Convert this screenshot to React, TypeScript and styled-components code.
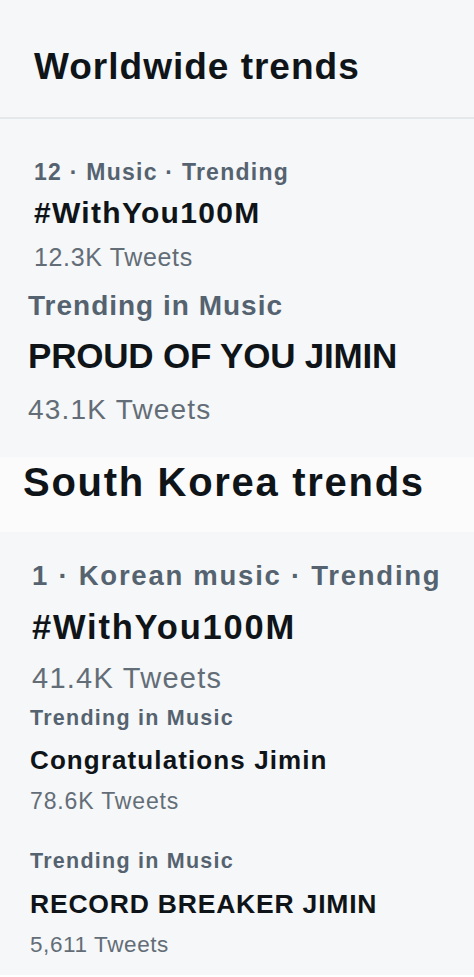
import styled, { createGlobalStyle } from "styled-components"

const GlobalStyle = createGlobalStyle`
  html, body {
    margin: 0;
    padding: 0;
    background: #ffffff;
  }
  body {
    font-family: "Liberation Sans", Arial, sans-serif;
    -webkit-font-smoothing: antialiased;
  }
`

type Line = { text: string; size: number; track: number; gap: number }

type Trend = {
  inset: number
  meta: Line
  topic: Line
  count: Line
}

const worldwide: Trend[] = [
  {
    inset: 34,
    meta: { text: "12 · Music · Trending", size: 23, track: 1.25, gap: 41.5 },
    topic: { text: "#WithYou100M", size: 30, track: 1.3, gap: 14.5 },
    count: { text: "12.3K Tweets", size: 25, track: 0.65, gap: 16.5 },
  },
  {
    inset: 28,
    meta: { text: "Trending in Music", size: 28, track: 1, gap: 22 },
    topic: { text: "PROUD OF YOU JIMIN", size: 35, track: -0.2, gap: 18.5 },
    count: { text: "43.1K Tweets", size: 28, track: 1.2, gap: 22.5 },
  },
]

const korea: Trend[] = [
  {
    inset: 32,
    meta: { text: "1 · Korean music · Trending", size: 27.5, track: 1.75, gap: 30.25 },
    topic: { text: "#WithYou100M", size: 34.5, track: 1.8, gap: 20.5 },
    count: { text: "41.4K Tweets", size: 29, track: 1.25, gap: 18.75 },
  },
  {
    inset: 30,
    meta: { text: "Trending in Music", size: 21.5, track: 1.25, gap: 15 },
    topic: { text: "Congratulations Jimin", size: 26, track: 1.1, gap: 17.5 },
    count: { text: "78.6K Tweets", size: 23, track: 0.85, gap: 17 },
  },
  {
    inset: 30,
    meta: { text: "Trending in Music", size: 21.5, track: 1.25, gap: 38 },
    topic: { text: "RECORD BREAKER JIMIN", size: 26.5, track: 0.8, gap: 18.5 },
    count: { text: "5,611 Tweets", size: 22.5, track: 0.6, gap: 16.5 },
  },
]

const Page = styled.div`
  background: #f5f7f8;
  display: flex;
  flex-direction: column;
  height: 975px;
`

const Header = styled.header`
  padding: 48px 0 32px 34px;
  border-bottom: 2px solid #e5e8ea;
`

const Heading = styled.h2<{ $size: number; $track: number }>`
  margin: 0;
  font-size: ${(p) => p.$size}px;
  letter-spacing: ${(p) => p.$track}px;
  line-height: 1;
  font-weight: 700;
  color: #0f1419;
  white-space: nowrap;
`

const TrendList = styled.section<{ $bottom: number }>`
  display: flex;
  flex-direction: column;
  padding-bottom: ${(p) => p.$bottom}px;
`

const RegionBand = styled.div`
  background: #fbfbfc;
  padding: 4.5px 0 30.5px 23px;
`

const Item = styled.div<{ $inset: number }>`
  display: flex;
  flex-direction: column;
  padding-left: ${(p) => p.$inset}px;
`

const Text = styled.div<{ $size: number; $track: number; $gap: number }>`
  margin-top: ${(p) => p.$gap}px;
  font-size: ${(p) => p.$size}px;
  letter-spacing: ${(p) => p.$track}px;
  line-height: 1;
  white-space: nowrap;
`

const Meta = styled(Text)`
  font-weight: 700;
  color: #556370;
`

const Topic = styled(Text)`
  font-weight: 700;
  color: #0f1419;
`

const Count = styled(Text)`
  font-weight: 400;
  color: #636d77;
`

const TrendItem = ({ trend }: { trend: Trend }) => (
  <Item $inset={trend.inset}>
    <Meta $size={trend.meta.size} $track={trend.meta.track} $gap={trend.meta.gap}>
      {trend.meta.text}
    </Meta>
    <Topic $size={trend.topic.size} $track={trend.topic.track} $gap={trend.topic.gap}>
      {trend.topic.text}
    </Topic>
    <Count $size={trend.count.size} $track={trend.count.track} $gap={trend.count.gap}>
      {trend.count.text}
    </Count>
  </Item>
)

const App = () => {
  return (
    <>
      <GlobalStyle />
      <Page>
        <Header>
          <Heading $size={37} $track={1}>Worldwide trends</Heading>
        </Header>
        <TrendList $bottom={33.5}>
          {worldwide.map((t, i) => (
            <TrendItem key={i} trend={t} />
          ))}
        </TrendList>
        <RegionBand>
          <Heading $size={40} $track={1.7}>South Korea trends</Heading>
        </RegionBand>
        <TrendList $bottom={19.5}>
          {korea.map((t, i) => (
            <TrendItem key={i} trend={t} />
          ))}
        </TrendList>
      </Page>
    </>
  )
}

export default App
